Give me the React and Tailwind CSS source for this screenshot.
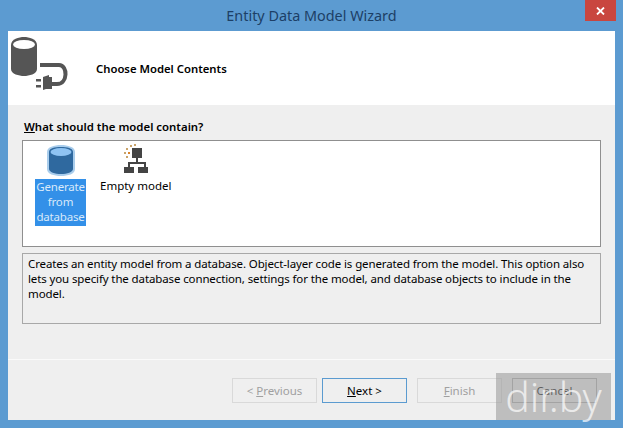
const font = "font-['Noto_Sans',sans-serif]";

const DatabasePlug = () => (
  <svg width="64" height="56" viewBox="0 0 64 56">
    <path d="M1 9C1 3 9 1 14 1C19 1 27 3 27 9V33C27 38 19 40 14 40C9 40 1 38 1 33Z" fill="#555" />
    <ellipse cx="14" cy="8.5" rx="11" ry="4.5" fill="#fff" />
    <path d="M30 29H49C58 29 58 48 47 48H42" fill="none" stroke="#555" strokeWidth="4" />
    <path d="M33 41L39 39V52L33 54Z" fill="#555" />
    <rect x="33" y="41" width="9" height="12" fill="#555" />
    <rect x="26" y="43" width="5" height="2.5" fill="#555" />
    <rect x="26" y="49" width="5" height="2.5" fill="#555" />
  </svg>
);

const BlueDatabase = () => (
  <svg width="30" height="33" viewBox="0 0 30 33">
    <path d="M1 8C1 3 8 1 15 1C22 1 29 3 29 8V25C29 30 22 32 15 32C8 32 1 30 1 25Z" fill="#a9cdec" />
    <path d="M3 8C3 4 9 3 15 3C21 3 27 4 27 8V25C27 28 21 30 15 30C9 30 3 28 3 25Z" fill="#2f699f" />
    <ellipse cx="15" cy="8" rx="10.5" ry="4" fill="#8fc3f2" />
  </svg>
);

const TreeIcon = () => (
  <svg width="26" height="30" viewBox="0 0 26 30">
    <g fill="#c9a36a">
      <rect x="3" y="4" width="2" height="2" />
      <rect x="1" y="8" width="2" height="2" />
      <rect x="3" y="12" width="2" height="2" />
      <rect x="7" y="1" width="2" height="2" />
      <rect x="11" y="0" width="2" height="2" />
      <rect x="5" y="8" width="2" height="2" fill="#d9822b" />
    </g>
    <g fill="#444">
      <rect x="9" y="4" width="10" height="10" />
      <rect x="13" y="14" width="2" height="5" />
      <rect x="5" y="18" width="18" height="2" />
      <rect x="5" y="18" width="2" height="5" />
      <rect x="21" y="18" width="2" height="5" />
      <rect x="1" y="23" width="10" height="6" />
      <rect x="15" y="23" width="10" height="6" />
    </g>
  </svg>
);

const WizardButton = ({ children, disabled, active }) => (
  <button
    className={`h-[25px] w-[85px] border text-[11.5px] ${
      active
        ? "border-[#5b9bd0] bg-[#efefef] text-black"
        : disabled
          ? "border-[#d9d9d9] bg-[#efefef] text-[#a0a0a0]"
          : "border-[#acacac] bg-[#efefef] text-black"
    }`}
  >
    {children}
  </button>
);

export default function App() {
  return (
    <div className={`${font} relative flex h-[428px] w-[623px] flex-col overflow-hidden bg-[#5c9bd1] px-2 pb-2`}>
      {/* title bar */}
      <div className="relative flex h-[31px] shrink-0 items-center justify-center">
        <span className="text-[14.4px] text-[#1c3f66]">Entity Data Model Wizard</span>
        <div className="absolute right-[-1px] top-0 flex h-[21px] w-[31px] items-center justify-center bg-[#c9463f]">
          <svg width="9" height="8" viewBox="0 0 9 8">
            <path d="M1 0.5L8 7.5M8 0.5L1 7.5" stroke="#fff" strokeWidth="1.8" />
          </svg>
        </div>
      </div>

      {/* header */}
      <div className="flex h-[74px] shrink-0 items-start bg-white">
        <div className="pl-[2px] pt-[5px]">
          <DatabasePlug />
        </div>
        <div className="pl-[22px] pt-[30px] text-[11.3px] font-semibold leading-4 text-black">Choose Model Contents</div>
      </div>

      {/* body */}
      <div className="flex flex-1 flex-col bg-[#efefef]">
        <div className="px-4 pb-[5px] pt-[13px] text-[11.4px] font-semibold leading-[17px] text-black">
          <span className="underline">W</span>hat should the model contain?
        </div>
        <div className="mx-[14px] flex h-[107px] items-start border border-[#8f8f8f] bg-white text-[11.5px] leading-[15px]">
          <div className="ml-[12px] flex w-[51px] flex-col items-center pt-[3px]">
            <BlueDatabase />
            <div className="mt-[2px] w-[51px] bg-[#3390e8] pb-[2px] text-center tracking-[-0.2px] text-[#d8e9fa]">
              Generate from database
            </div>
          </div>
          <div className="ml-[14px] flex flex-col items-center pt-[3px] text-black">
            <TreeIcon />
            <div className="mt-[4px] whitespace-nowrap">Empty model</div>
          </div>
        </div>
        <div className="mx-[14px] mt-[6px] h-[71px] border border-[#a8a8a8] px-[5px] pt-[2px] text-[11.5px] leading-[15px] tracking-[-0.12px] text-black">
          Creates an entity model from a database. Object-layer code is generated from the model. This option also
          lets you specify the database connection, settings for the model, and database objects to include in the
          model.
        </div>
        <div className="mt-[35px] flex flex-1 items-start justify-end gap-[10px] border-t border-[#fafafa] pr-[18px] pt-[18px]">
          <div className="flex gap-[5px]">
            <WizardButton disabled>
              &lt; <span className="underline">P</span>revious
            </WizardButton>
            <WizardButton active>
              <span className="underline">N</span>ext &gt;
            </WizardButton>
          </div>
          <div className="flex gap-[10px]">
            <WizardButton disabled>
              <span className="underline">F</span>inish
            </WizardButton>
            <WizardButton>Cancel</WizardButton>
          </div>
        </div>
      </div>

      {/* site watermark */}
      <div className="absolute left-[496px] top-[373px] flex h-[47px] w-[115px] items-center justify-center bg-[#9d9d9d]/60 text-[41px] font-light leading-none text-white/70">
        dir.by
      </div>
    </div>
  );
}
